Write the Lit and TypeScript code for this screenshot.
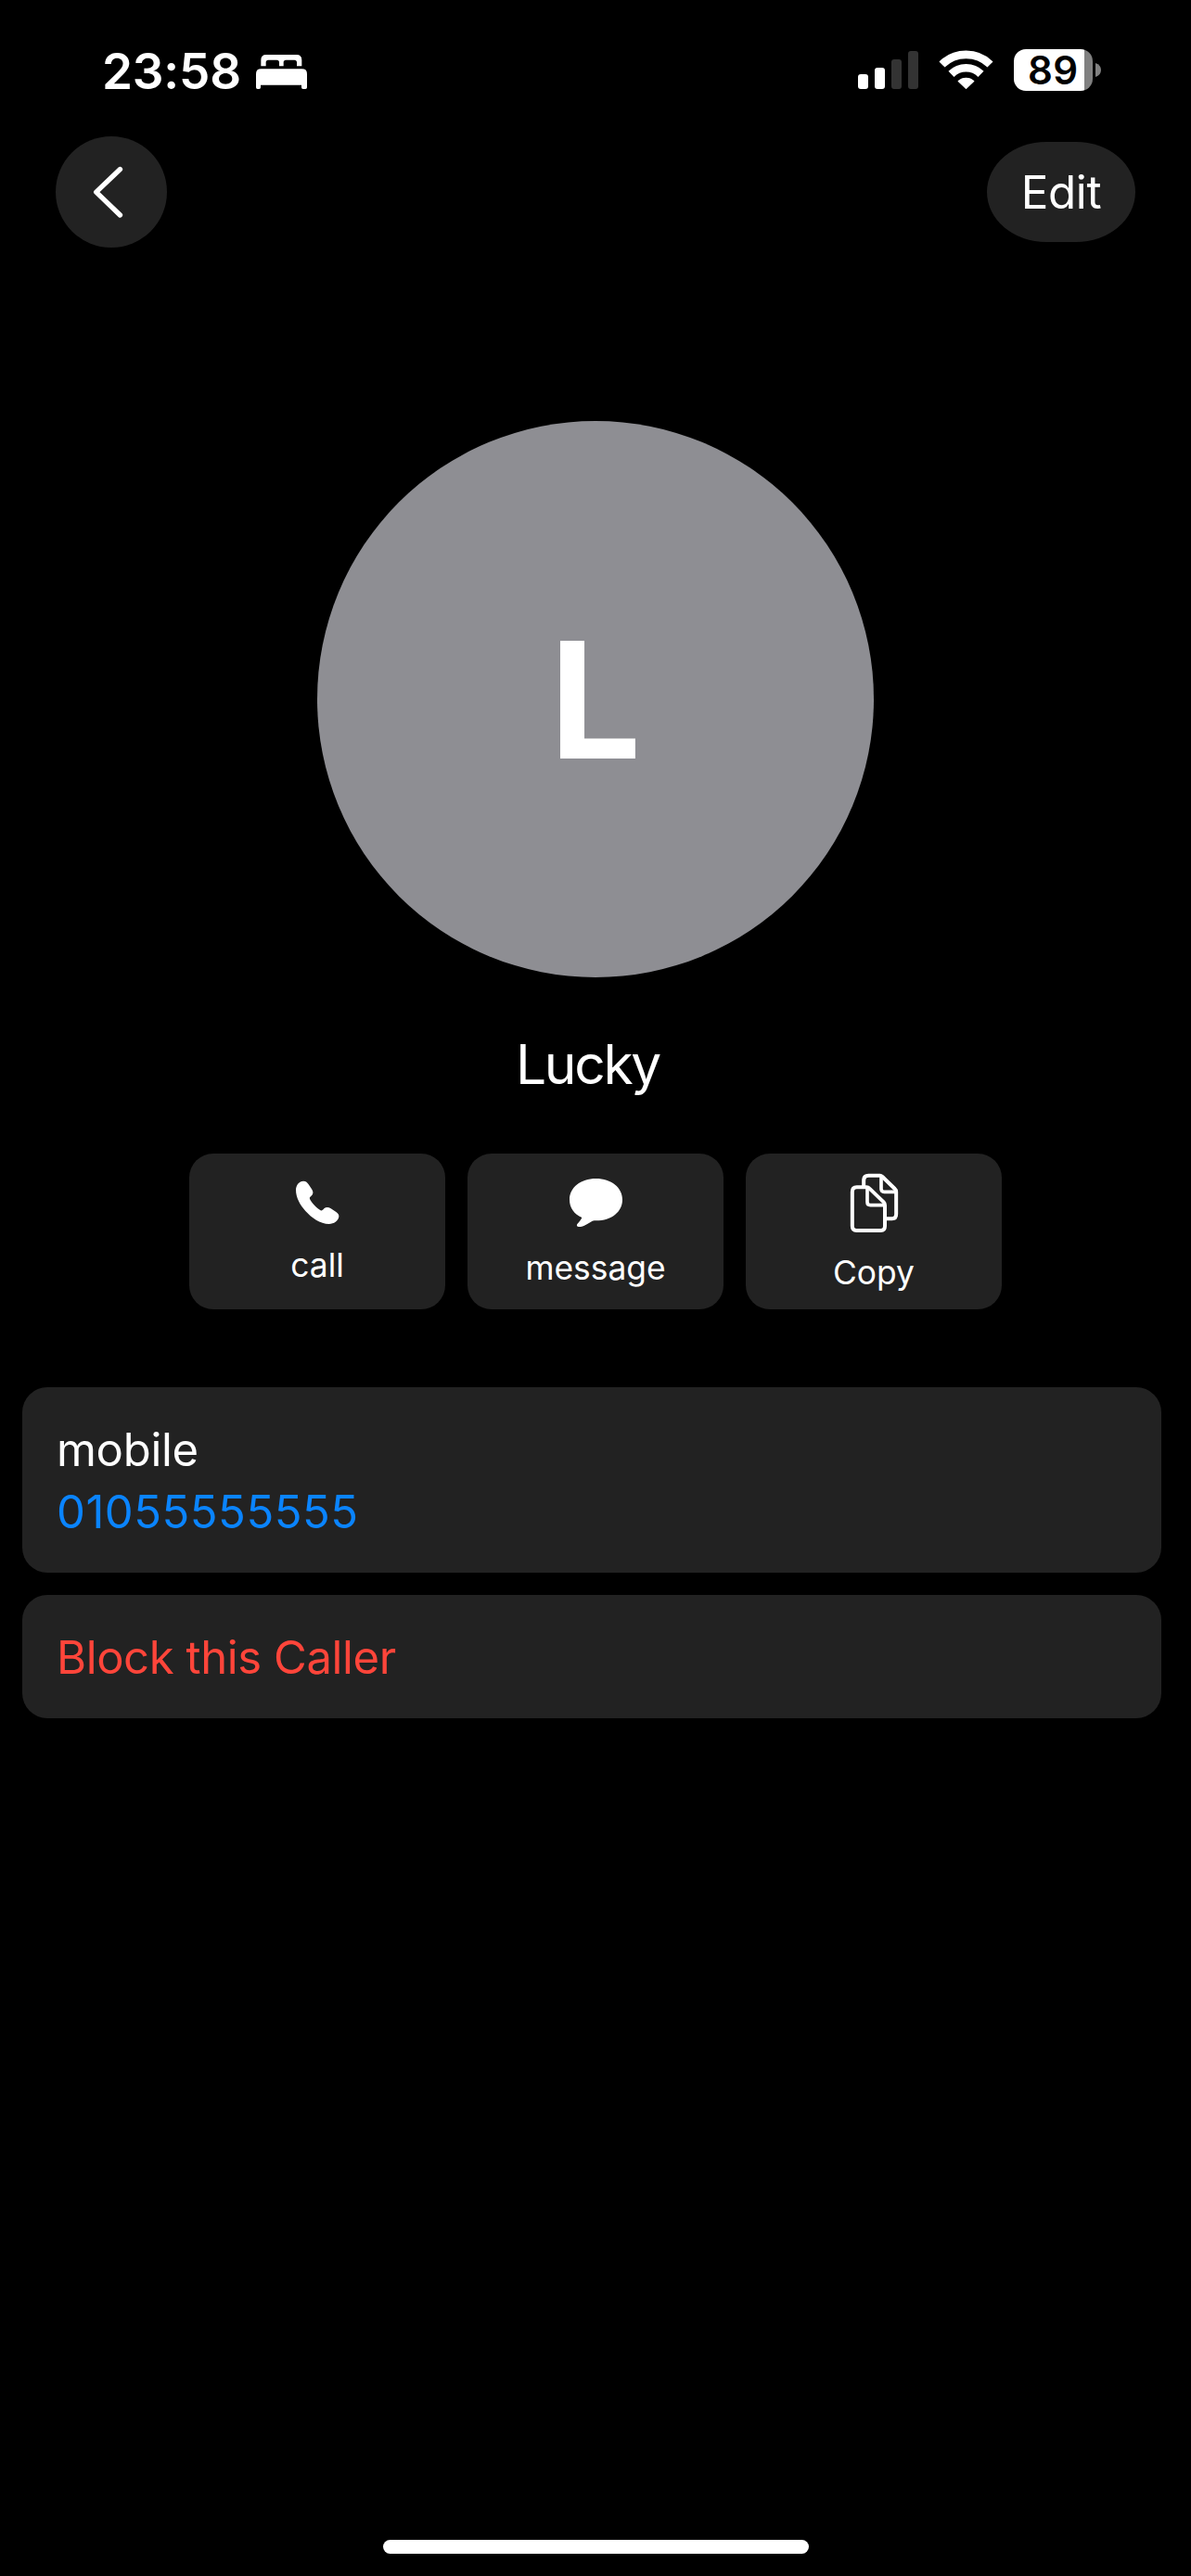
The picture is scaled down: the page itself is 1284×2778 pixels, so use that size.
import { LitElement, html, css, svg } from "lit";
import { customElement, property } from "lit/decorators.js";

const phoneIcon = svg`<path d="M411 131C420 131 424 136 428 142L439 158C444 166 443 172 438 178C434 182 430 184 432 189C437 201 455 219 467 226C471 228 474 225 478 220C484 215 491 214 499 219L517 231C524 236 527 240 526 247C524 260 510 270 494 270C466 270 437 249 418 228C400 208 387 184 387 160C387 144 398 131 411 131Z" fill="#fff"/>`;

const bubbleIcon = svg`<path d="M1357.5 123C1407 123 1443 152 1443 191C1443 230 1408 259 1357.5 259C1354 259 1350 259 1346 260C1333 267 1319 279 1302 279C1296 279 1294 274 1297 270C1302 264 1309 257 1312 249C1287 238 1272 217 1272 191C1272 152 1308 123 1357.5 123Z" fill="#fff"/>`;

const copyIcon = svg`<g fill="none" stroke="#fff" stroke-width="12" stroke-linejoin="round">
  <path d="M853 151H883Q888 151 892 155L938 199Q942 203 942 209V277Q942 291 929 291H850Q836.5 291 836.5 277V166Q836.5 151 851 151Z"/>
  <path d="M885 153V199Q885 209 895 209H941" stroke-width="11"/>
  <path d="M873.500 147V129Q873.500 113.500 889 113.500H926Q930 113.500 934 117L974 156Q978.500 160 978.500 166V238Q978.500 253 965 253H947"/>
  <path d="M930 115V156Q930 166 940 166H977" stroke-width="11"/>
</g>`;

@customElement("contact-action")
class ContactAction extends LitElement {
  @property() label = "";
  @property() box = "";
  @property({ type: Number }) iconHeight = 48;
  @property({ attribute: false }) icon: unknown;

  static styles = css`
    :host {
      display: flex;
      flex-direction: column;
      align-items: center;
      justify-content: center;
      gap: 24px;
      height: 168px;
      border-radius: 26px;
      background: #222;
    }
    svg {
      display: block;
      overflow: visible;
    }
    .label {
      font-size: 35.4px;
      line-height: 43px;
      white-space: nowrap;
    }
  `;

  render() {
    return html`
      <svg width="60" height=${this.iconHeight} viewBox=${this.box}>${this.icon}</svg>
      <span class="label">${this.label}</span>
    `;
  }
}

@customElement("status-bar")
class StatusBar extends LitElement {
  static styles = css`
    :host {
      display: flex;
      justify-content: space-between;
      align-items: flex-start;
      height: 147px;
      padding: 0 97px 0 110px;
      box-sizing: border-box;
    }
    svg {
      display: block;
    }
    .left,
    .right {
      display: flex;
      align-items: flex-start;
    }
    .time {
      width: 166px;
      margin-top: 46px;
      font-size: 53px;
      font-weight: 600;
      line-height: 62px;
      letter-spacing: -0.2px;
    }
    .bed {
      margin-top: 59px;
    }
    .signal {
      margin: 55px 22px 0 0;
    }
    .wifi {
      margin: 54px 22px 0 0;
    }
    .battery {
      display: flex;
      align-items: center;
      gap: 3px;
      margin-top: 53px;
    }
    .cell {
      width: 85px;
      height: 45px;
      box-sizing: border-box;
      padding-left: 15px;
      border-radius: 13px;
      background: linear-gradient(90deg, #fff 76px, #808080 76px);
      color: #000;
      font-size: 42px;
      font-weight: 600;
      line-height: 46px;
      letter-spacing: 0.3px;
    }
  `;

  render() {
    return html`
      <div class="left">
        <span class="time">23:58</span>
        <svg class="bed" width="55" height="38" viewBox="708 87 165 114" fill="#fff">
          <path d="M724 124V104Q724 87 741 87H839Q856 87 856 104V124H840V112Q840 104 832 104H805Q797 104 797 112V124H783V112Q783 104 775 104H748Q740 104 740 112V124Z"/>
          <path d="M708 149Q708 133 724 133H857Q873 133 873 149V193Q873 198 868 198H860Q855 198 855 193V185H723V193Q723 198 718 198H713Q708 198 708 193Z"/>
        </svg>
      </div>
      <div class="right">
        <svg class="signal" width="65" height="41" viewBox="0 0 65 41">
          <rect x="0" y="25" width="11" height="16" rx="3" fill="#fff"/>
          <rect x="18" y="18" width="11" height="23" rx="3" fill="#fff"/>
          <rect x="36" y="9" width="11" height="32" rx="3" fill="#333"/>
          <rect x="54" y="0" width="11" height="41" rx="3" fill="#333"/>
        </svg>
        <svg class="wifi" width="59" height="42" viewBox="336 72 177 126" fill="none" stroke="#fff" stroke-width="26">
          <path d="M346.500 118.500A112 112 0 0 1 502.500 118.500"/>
          <path d="M376.500 149.500A68.500 68.500 0 0 1 472.500 149.500"/>
          <path d="M400 172.500A36 36 0 0 1 449 172.500L424.500 196Z" fill="#fff" stroke-width="4" stroke-linejoin="round"/>
        </svg>
        <div class="battery">
          <div class="cell">89</div>
          <svg width="6" height="15" viewBox="0 0 6 15"><path d="M0 0Q6 2 6 7.500T0 15Z" fill="#808080"/></svg>
        </div>
      </div>
    `;
  }
}

@customElement("app-root")
class AppRoot extends LitElement {
  static styles = css`
    :host {
      display: flex;
      flex-direction: column;
      width: 1284px;
      height: 2778px;
      overflow: hidden;
      background: #000;
      color: #fff;
      font-family: Inter, "Liberation Sans", sans-serif;
    }
    .nav {
      display: flex;
      justify-content: space-between;
      align-items: center;
      height: 120px;
      padding: 0 60px;
    }
    .back {
      display: grid;
      place-items: center;
      width: 120px;
      height: 120px;
      border-radius: 50%;
      background: #222;
    }
    .edit {
      width: 160px;
      height: 108px;
      box-sizing: border-box;
      border-radius: 64px / 54px;
      background: #222;
      font-size: 49.3px;
      line-height: 108px;
      letter-spacing: -0.34px;
      text-align: center;
    }
    .avatar {
      align-self: center;
      width: 600px;
      height: 600px;
      margin-top: 187px;
      border-radius: 50%;
      background: #8e8e93;
      font-size: 174.7px;
      font-weight: 700;
      line-height: 601px;
      text-align: center;
    }
    .name {
      margin-top: 58px;
      padding-right: 17px;
      font-size: 58.7px;
      line-height: 72px;
      letter-spacing: -2.3px;
      text-align: center;
    }
    .actions {
      display: grid;
      grid-template-columns: repeat(3, 276px);
      justify-content: center;
      gap: 24px;
      margin-top: 60px;
    }
    .cards {
      display: flex;
      flex-direction: column;
      gap: 24px;
      margin: 84px 32px 0 24px;
      font-size: 49px;
      line-height: 67px;
    }
    .card {
      padding: 34px 36px 32px 37px;
      border-radius: 27px;
      background: #222;
    }
    .field {
      letter-spacing: -0.3px;
    }
    .number {
      color: #0a84ff;
      letter-spacing: 0.5px;
    }
    .block {
      color: #ff453a;
      letter-spacing: -0.4px;
    }
    .home {
      width: 459px;
      height: 15px;
      margin: auto auto 24px 413px;
      border-radius: 8px;
      background: #fff;
    }
  `;

  render() {
    return html`
      <status-bar></status-bar>
      <div class="nav">
        <div class="back">
          <svg width="120" height="120" viewBox="60 351 360 360" fill="none" stroke="#fff" stroke-width="16" stroke-linecap="round" stroke-linejoin="round">
            <path d="M268.500 457.500L191 531.500L268.500 606"/>
          </svg>
        </div>
        <div class="edit">Edit</div>
      </div>
      <div class="avatar">L</div>
      <div class="name">Lucky</div>
      <div class="actions">
        <contact-action label="call" box="366 120 180 147" .iconHeight=${49} .icon=${phoneIcon}></contact-action>
        <contact-action label="message" box="1266 111 180 165" .iconHeight=${55} .icon=${bubbleIcon}></contact-action>
        <contact-action label="Copy" box="816 96 180 195" .iconHeight=${65} .icon=${copyIcon}></contact-action>
      </div>
      <div class="cards">
        <div class="card">
          <div class="field">mobile</div>
          <div class="number">01055555555</div>
        </div>
        <div class="card block">Block this Caller</div>
      </div>
      <div class="home"></div>
    `;
  }
}
